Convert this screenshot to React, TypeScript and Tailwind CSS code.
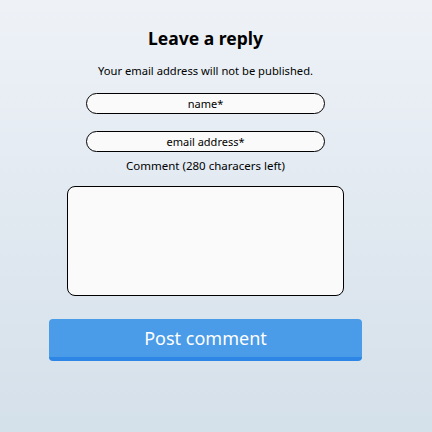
export default function App() {
  return (
    <div
      className="w-[432px] h-[432px] bg-gradient-to-b from-[#eef2f7] to-[#d4e0ea] text-black"
      style={{ fontFamily: '"Noto Sans", "Open Sans", sans-serif' }}
    >
      <div className="w-[411px] flex flex-col items-center pt-[26px]">
        <h2 className="text-[17.5px] font-bold leading-[24px]">Leave a reply</h2>
        <p className="mt-[13px] text-[11.2px] leading-[15px]">Your email address will not be published.</p>
        <input
          type="text"
          placeholder="name*"
          className="mt-[15px] w-[239px] h-[21px] rounded-full border border-black bg-[#fafafa] text-center text-[11px] placeholder:text-black outline-none"
        />
        <input
          type="text"
          placeholder="email address*"
          className="mt-[17px] w-[239px] h-[21px] rounded-full border border-black bg-[#fafafa] text-center text-[11px] placeholder:text-black outline-none"
        />
        <label className="mt-[6px] text-[11.5px] leading-[15px]">Comment (280 characers left)</label>
        <textarea className="mt-[13px] w-[277px] h-[110px] rounded-[8px] border border-black bg-[#fafafa] resize-none outline-none" />
        <button className="mt-[23px] w-[313px] h-[42px] rounded-[4px] bg-[#4a9be8] border-b-[4px] border-[#2d86e5] text-white text-[18px] font-normal">
          Post comment
        </button>
      </div>
    </div>
  );
}
